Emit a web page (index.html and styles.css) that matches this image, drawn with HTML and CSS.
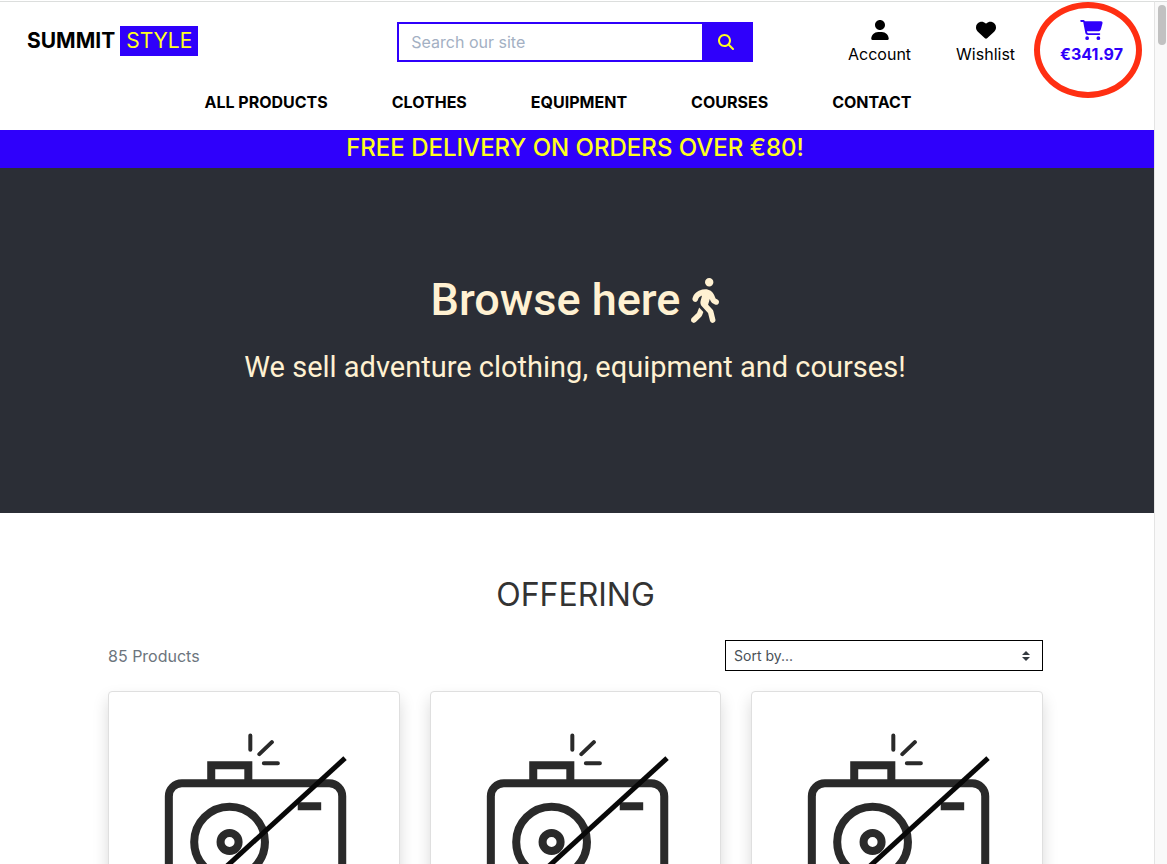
FILE: index.html
```html
<!DOCTYPE html>
<html lang="en">
<head>
<meta charset="utf-8">
<meta name="viewport" content="width=device-width, initial-scale=1">
<title>Summit Style</title>
<link rel="stylesheet" href="styles.css">
</head>
<body>
<svg class="defs" aria-hidden="true">
  <symbol id="no-image" viewBox="1 1 289 289">
    <g fill="none" stroke="#2a2a2a">
      <g stroke-width="4" stroke-linecap="round">
        <path d="M142 44.500V58.500M151 63L163.500 51M155.500 72H169.500"/>
      </g>
      <path stroke-width="8" d="M103 92V74H140V92"/>
      <rect stroke-width="8" x="60.700" y="92" width="173" height="128" rx="13"/>
      <circle stroke-width="8" cx="121.300" cy="150.700" r="35.300"/>
      <circle stroke-width="8" cx="121.300" cy="150.700" r="9"/>
      <path stroke-width="8" d="M189.300 115H212.700"/>
      <path stroke="#080808" stroke-width="5" d="M236.500 67L46 241"/>
    </g>
  </symbol>
</svg>
<div class="window">
  <div class="page">
    <header class="header">
      <div class="topbar">
        <a class="logo" href="#"><strong>SUMMIT</strong><span class="logo-tag">STYLE</span></a>
        <form class="search">
          <input class="search-input" type="text" placeholder="Search our site" aria-label="Search our site">
          <button class="search-button" type="submit" aria-label="Search">
            <svg width="16" height="16" viewBox="0 0 512 512" fill="currentColor"><path d="M416 208c0 45.900-14.900 88.300-40 122.700L502.600 457.400c12.500 12.500 12.500 32.800 0 45.300s-32.800 12.500-45.300 0L330.700 376c-34.400 25.200-76.800 40-122.700 40C93.100 416 0 322.900 0 208S93.100 0 208 0S416 93.100 416 208zM208 352a144 144 0 1 0 0-288 144 144 0 1 0 0 288z"/></svg>
          </button>
        </form>
        <div class="actions">
          <a class="action" href="#">
            <svg width="18" height="20" viewBox="0 0 448 512" fill="currentColor"><path d="M224 256c70.700 0 128-57.300 128-128S294.700 0 224 0S96 57.300 96 128s57.300 128 128 128zm-45.700 48C79.800 304 0 383.800 0 482.300C0 498.700 13.300 512 29.700 512H418.300c16.400 0 29.700-13.300 29.700-29.700C448 383.800 368.200 304 269.700 304H178.300z"/></svg>
            <span>Account</span>
          </a>
          <a class="action" href="#">
            <svg width="20" height="20" viewBox="0 0 512 512" fill="currentColor"><path d="M47.600 300.400L228.300 469.100c7.500 7 17.400 10.900 27.700 10.900s20.200-3.900 27.700-10.900L464.400 300.400c30.400-28.300 47.600-68 47.600-109.500v-5.800c0-69.900-50.500-129.500-119.400-141C347 36.500 300.600 51.400 268 84L256 96 244 84c-32.600-32.600-79-47.500-124.600-39.900C50.500 55.600 0 115.200 0 185.100v5.800c0 41.500 17.200 81.200 47.600 109.500z"/></svg>
            <span>Wishlist</span>
          </a>
          <a class="action action-cart" href="#">
            <svg width="23" height="20" viewBox="0 0 576 512" fill="currentColor"><path d="M0 24C0 10.700 10.700 0 24 0H69.500c22 0 41.500 12.800 50.600 32h411c26.300 0 45.500 25 38.600 50.400l-41 152.300c-8.500 31.400-37 53.300-69.500 53.300H170.700l5.400 28.500c2.200 11.300 12.100 19.500 23.600 19.500H488c13.300 0 24 10.700 24 24s-10.700 24-24 24H199.700c-34.600 0-64.300-24.600-70.700-58.500L77.400 54.500c-.7-3.800-4-6.500-7.900-6.500H24C10.700 48 0 37.300 0 24zM128 464a48 48 0 1 1 96 0 48 48 0 1 1 -96 0zm336-48a48 48 0 1 1 0 96 48 48 0 1 1 0-96z"/></svg>
            <span>€341.97</span>
          </a>
        </div>
      </div>
      <nav class="menu">
        <a href="#">ALL PRODUCTS</a>
        <a href="#">CLOTHES</a>
        <a href="#">EQUIPMENT</a>
        <a href="#">COURSES</a>
        <a href="#">CONTACT</a>
      </nav>
    </header>
    <p class="banner">FREE DELIVERY ON ORDERS OVER €80!</p>
    <section class="hero">
      <h1 class="hero-title">Browse here
        <svg width="28" height="45" viewBox="0 0 320 512" fill="currentColor" aria-hidden="true"><path d="M160 48a48 48 0 1 1 96 0 48 48 0 1 1 -96 0zM126.500 199.300c-1 .4-1.900 .8-2.900 1.200l-8 3.500c-16.400 7.300-29 21.200-34.700 38.200l-2.600 7.800c-5.600 16.800-23.700 25.800-40.500 20.200s-25.800-23.700-20.200-40.500l2.600-7.800c11.400-34.100 36.600-61.900 69.400-76.500l8-3.500c20.800-9.200 43.300-14 66.100-14c44.600 0 84.800 26.800 101.900 67.900L281 232.700l21.400 10.700c15.800 7.900 22.200 27.100 14.300 42.900s-27.100 22.200-42.900 14.300L247 287.300c-10.300-5.200-18.400-13.800-22.800-24.500l-9.600-23-19.300 65.500 49.500 54c5.400 5.900 9.200 13 11.200 20.800l23 92.100c4.300 17.100-6.100 34.500-23.300 38.800s-34.500-6.100-38.800-23.300l-22-88.100-70.700-77.100c-14.800-16.100-20.300-38.600-14.700-59.700l16.900-63.500zM68.700 398l25-62.400c2.100 3 4.500 5.800 7 8.600l40.700 44.400-14.500 36.200c-2.400 6-6 11.500-10.600 16.100L54.600 502.600c-12.500 12.500-32.800 12.500-45.300 0s-12.500-32.800 0-45.300L68.700 398z"/></svg>
      </h1>
      <p class="hero-text">We sell adventure clothing, equipment and courses!</p>
    </section>
    <main class="offering">
      <h2 class="offering-title">OFFERING</h2>
      <div class="toolbar">
        <p class="count">85 Products</p>
        <select class="sort" aria-label="Sort products">
          <option>Sort by...</option>
          <option>Price (low to high)</option>
          <option>Price (high to low)</option>
        </select>
      </div>
      <div class="products">
        <a class="card" href="#" aria-label="Product 1"><svg class="card-image" viewBox="0 0 289 289"><use href="#no-image"/></svg></a>
        <a class="card" href="#" aria-label="Product 2"><svg class="card-image" viewBox="0 0 289 289"><use href="#no-image"/></svg></a>
        <a class="card" href="#" aria-label="Product 3"><svg class="card-image" viewBox="0 0 289 289"><use href="#no-image"/></svg></a>
      </div>
    </main>
  </div>
  <div class="scrollbar"><div class="scrollbar-thumb"></div></div>
</div>
</body>
</html>
```
FILE: styles.css
```css
*, *::before, *::after { box-sizing: border-box; }

body {
  margin: 0;
  font-family: Inter, "Liberation Sans", sans-serif;
  font-size: 16px;
  line-height: 24px;
  color: #000;
  background: #fff;
}

h1, h2, p { margin: 0; }
a { color: inherit; text-decoration: none; }

.defs { position: absolute; width: 0; height: 0; }

.window {
  display: flex;
  height: 100vh;
  padding-top: 1px;
}

.page {
  flex: 1;
  min-width: 0;
  overflow: auto;
  scrollbar-width: none;
  border-top: 1px solid #dcdedd;
}

.scrollbar {
  flex: none;
  width: 13px;
  padding: 3px 0 0 3px;
  border-top: 1px solid #dcdedd;
  border-left: 1px solid #e4e4e4;
  background: #f9f9f9;
}

.scrollbar-thumb {
  width: 8px;
  height: 40px;
  border-radius: 4px;
  background: #c1c1c1;
}

.header { padding-right: 4px; }

.topbar {
  display: grid;
  grid-template-columns: repeat(3, 1fr);
  align-items: start;
  padding-top: 16px;
}

.logo {
  display: flex;
  gap: 5px;
  padding: 8px 0 0 27px;
  font-size: 21px;
  line-height: 30px;
}

.logo strong { font-weight: 700; }

.logo-tag {
  padding: 0 6px;
  color: #ffff1f;
  background: #2f00fb;
}

.search {
  display: flex;
  margin: 4px 14px 0;
  border: 2px solid #2f00fb;
}

.search-input {
  flex: 1;
  min-width: 0;
  height: 36px;
  padding: 0 12px;
  border: 0;
  font: inherit;
  background: #fff;
}

.search-input::placeholder { color: #a3b0c3; opacity: 1; }

.search-button {
  display: flex;
  align-items: center;
  justify-content: center;
  width: 49px;
  padding: 0;
  border: 0;
  color: #ffff1f;
  background: #2f00fb;
}

.actions {
  display: flex;
  justify-content: flex-end;
  gap: 45px;
  padding: 2px 27px 0 0;
}

.action {
  display: flex;
  flex-direction: column;
  align-items: center;
  gap: 2px;
}

.action-cart {
  position: relative;
  color: #2f00fb;
  font-weight: 700;
}

.action-cart::after {
  content: "";
  position: absolute;
  top: -18px;
  left: -26px;
  width: 108px;
  height: 96px;
  border: 6px solid #ff2f12;
  border-radius: 50%;
  pointer-events: none;
}

.menu {
  display: flex;
  justify-content: center;
  gap: 64px;
  padding: 24px 34px 16px 0;
  font-weight: 700;
}

.banner {
  padding: 0 4px 2px 0;
  font-size: 24px;
  font-weight: 500;
  line-height: 36px;
  text-align: center;
  color: #ffff1f;
  background: #2f00fb;
}

.hero {
  padding: 104px 4px 128px 0;
  font-family: Roboto, "Liberation Sans", sans-serif;
  text-align: center;
  color: #fff1d2;
  background: #2b2e36;
}

.hero-title {
  display: flex;
  align-items: center;
  justify-content: center;
  gap: 11px;
  font-size: 45px;
  font-weight: 500;
  line-height: 56px;
}

.hero-text {
  margin-top: 21px;
  font-size: 29px;
  line-height: 36px;
}

.offering { padding: 62px 111px 48px 108px; }

.offering-title {
  font-size: 32px;
  font-weight: 400;
  line-height: 40px;
  text-align: center;
  color: #333;
}

.toolbar {
  display: flex;
  align-items: center;
  justify-content: space-between;
  margin: 25px 0 20px;
}

.count { color: #6c757d; }

.sort {
  width: 34%;
  height: 31px;
  padding: 0 8px;
  appearance: none;
  border: 1px solid #000;
  border-radius: 0;
  font: inherit;
  font-size: 14px;
  color: #495057;
  background: #fff url("data:image/svg+xml,%3csvg xmlns='http://www.w3.org/2000/svg' width='4' height='5' viewBox='0 0 4 5'%3e%3cpath fill='%23343a40' d='M2 0L0 2h4zm0 5L0 3h4z'/%3e%3c/svg%3e") no-repeat right 12px center / 8px 10px;
}

.products {
  display: grid;
  grid-template-columns: repeat(3, 1fr);
  gap: 30px;
}

.card {
  border: 1px solid #dfdfdf;
  border-radius: 4px;
  background: #fff;
  box-shadow: 0 8px 16px rgba(0, 0, 0, 0.15);
}

.card-image { display: block; width: 100%; }
```
